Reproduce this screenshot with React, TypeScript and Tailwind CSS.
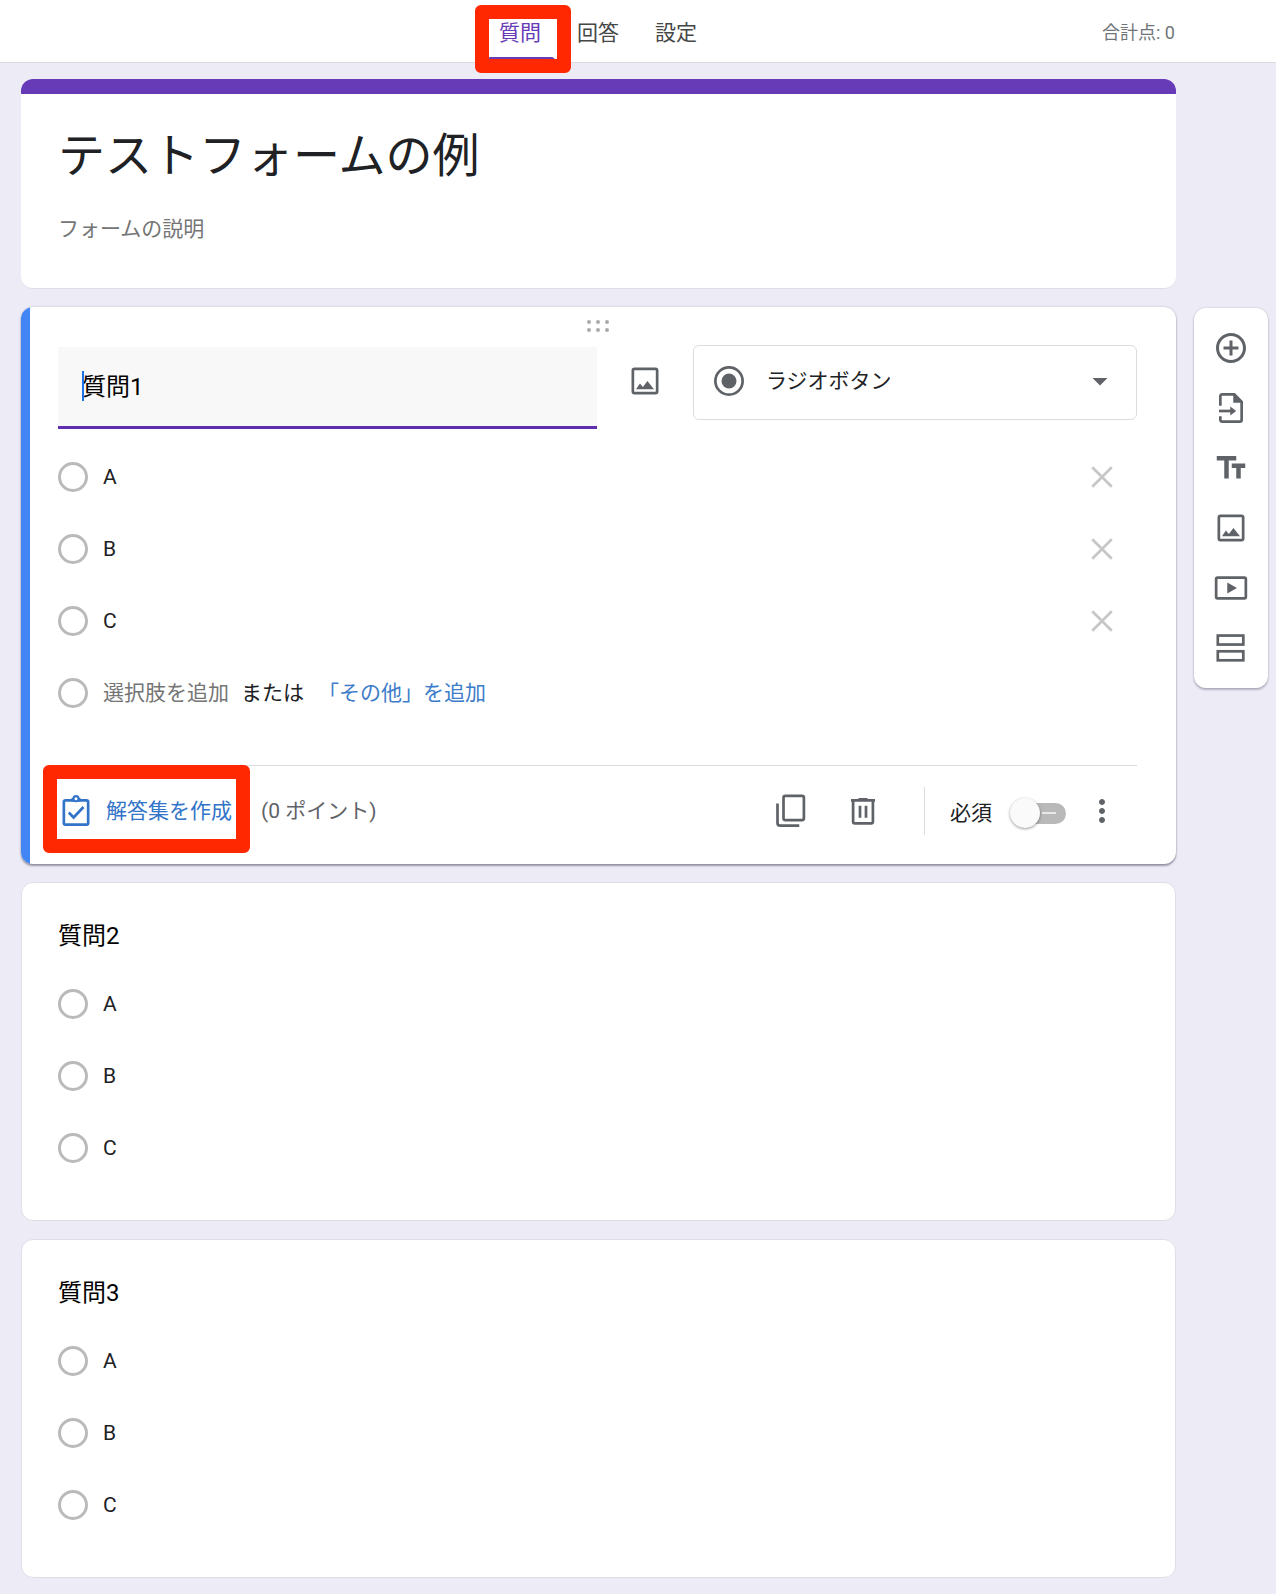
import { useState } from "react";
import type { ReactNode } from "react";
import { MdAddCircleOutline, MdMoreVert, MdTextFields } from "react-icons/md";

const tabs = ["質問", "回答", "設定"];
const options = ["A", "B", "C"];

function Icon({ children }: { children: ReactNode }) {
  return (
    <svg
      viewBox="0 0 24 24"
      className="size-9 shrink-0"
      fill="none"
      stroke="currentColor"
      strokeWidth="1.8"
      aria-hidden="true"
    >
      {children}
    </svg>
  );
}

function ImageIcon() {
  return (
    <Icon>
      <rect x="3.9" y="3.9" width="16.2" height="16.2" rx="1.1" />
      <path d="M6 17.5l2.6-3.8 2 2.3 3-4 4.4 5.500z" fill="currentColor" stroke="none" />
    </Icon>
  );
}

function ImportIcon() {
  return (
    <Icon>
      <path d="M4.9 10.5V4.2c0-.7.5-1.3 1.2-1.3h8.1l4.9 4.9v12c0 .7-.5 1.3-1.2 1.3H6.1c-.7 0-1.2-.6-1.2-1.3v-2.3" />
      <path d="M13.5 2.5v6h6zM11.5 11v6l4-3z" fill="currentColor" stroke="none" />
      <path d="M4 14h9" />
    </Icon>
  );
}

function VideoIcon() {
  return (
    <Icon>
      <rect x="2.1" y="5.1" width="19.8" height="13.8" rx="1" />
      <path d="M9.5 8.3v7.4l6.5-3.7z" fill="currentColor" stroke="none" />
    </Icon>
  );
}

function SectionIcon() {
  return (
    <Icon>
      <rect x="3.2" y="3.7" width="17" height="6" />
      <rect x="3.2" y="14.2" width="17" height="6" />
    </Icon>
  );
}

function ClipboardIcon() {
  return (
    <Icon>
      <rect x="3.9" y="4.9" width="16.2" height="16.2" rx="1.1" />
      <path d="M9 4.5h6" strokeWidth="2.4" />
      <circle cx="12" cy="3.8" r="1.7" fill="white" strokeWidth="1.4" />
      <path d="M7.2 13l3.2 3.3 6.6-7" />
    </Icon>
  );
}

function CopyIcon() {
  return (
    <Icon>
      <rect x="7" y="1.9" width="13.6" height="16.2" rx="1.2" />
      <path d="M3 7v13c0 1.1.6 1.7 1.7 1.7h12.8" />
    </Icon>
  );
}

function TrashIcon() {
  return (
    <Icon>
      <path d="M5.4 5.5v13.6c0 .6.5 1.1 1.2 1.1h10.8c.7 0 1.2-.5 1.2-1.1V5.5M4 4.9h16M9 4.2h6" />
      <path d="M10 8.5v8M14 8.5v8" />
    </Icon>
  );
}

function Radio({ name, id }: { name: string; id: string }) {
  return (
    <input
      type="radio"
      name={name}
      id={id}
      className="size-[30px] shrink-0 appearance-none rounded-full border-[3px] border-[#bababa] bg-white checked:bg-[#673ab7]"
    />
  );
}

function QuestionCard({ title, name }: { title: string; name: string }) {
  return (
    <section className="rounded-xl border border-[#dfdde6] bg-white px-9 pt-[37px] pb-9">
      <h2 className="mb-4 text-2xl text-black">{title}</h2>
      {options.map((option) => (
        <div key={option} className="flex h-[72px] items-center gap-[15px]">
          <Radio name={name} id={`${name}-${option}`} />
          <label htmlFor={`${name}-${option}`}>{option}</label>
        </div>
      ))}
    </section>
  );
}

export default function App() {
  const [title, setTitle] = useState("質問1");
  const [required, setRequired] = useState(false);

  return (
    <div className="min-h-screen bg-[#edebf6] font-['Roboto','Noto_Sans_CJK_JP',sans-serif] text-[21px] leading-8 text-[#202124]">
      <header className="grid h-[63px] grid-cols-[1fr_auto_1fr] items-center border-b border-[#dcdbe0] bg-white pt-1 pr-[101px] pl-[21px]">
        <span />
        <nav className="flex gap-9">
          {tabs.map((tab, i) => (
            <div key={tab} className="relative">
              <button className={i === 0 ? "text-[#673ab7]" : "text-[#444746]"}>{tab}</button>
              {i === 0 && (
                <>
                  <span className="absolute top-10 -left-3 h-1 w-[68px] rounded-t bg-[#673ab7]" />
                  <span className="pointer-events-none absolute -top-3 -left-6 h-[68px] w-24 rounded-md border-[14px] border-[#ff2800]" />
                </>
              )}
            </div>
          ))}
        </nav>
        <span className="text-right text-lg text-[#70757a]">合計点: 0</span>
      </header>

      <div className="flex items-start gap-[18px] pt-4 pr-2 pb-4 pl-[21px]">
        <main className="flex min-w-0 flex-1 flex-col gap-[18px]">
          <section className="overflow-hidden rounded-xl border-b border-[#dfdde6] bg-white">
            <div className="h-[15px] bg-[#673ab7]" />
            <div className="px-[37px] pt-8 pb-[43px]">
              <h1 className="text-[47px] leading-[60px]">テストフォームの例</h1>
              <p className="mt-[27px] text-[#757575]">フォームの説明</p>
            </div>
          </section>

          <section className="flex overflow-hidden rounded-xl bg-white shadow-[0_2px_2px_rgba(60,55,80,0.45),0_0_2px_rgba(60,55,80,0.3)]">
            <div className="w-[9px] shrink-0 bg-[#4285f4]" />
            <div className="min-w-0 flex-1 pr-[39px] pb-2 pl-7">
              <div className="flex h-[38px] items-center justify-center text-[#aaa]">
                <svg viewBox="0 0 24 14" className="h-[14px] w-6" fill="currentColor" aria-hidden="true">
                  {[3, 12, 21].map((x) => (
                    <g key={x}>
                      <circle cx={x} cy="3" r="2" />
                      <circle cx={x} cy="11" r="2" />
                    </g>
                  ))}
                </svg>
              </div>

              <div className="flex items-start">
                <div className="relative flex-1 pt-0.5">
                  <input
                    aria-label="質問"
                    value={title}
                    onChange={(e) => setTitle(e.target.value)}
                    className="block h-[82px] w-full border-b-[3px] border-[#5f2fb0] bg-[#f8f8f8] px-6 pb-1 text-2xl text-black outline-none"
                  />
                  <span className="absolute top-[26px] left-6 h-[30px] w-0.5 bg-[#1a73e8]" />
                </div>
                <button aria-label="画像を追加" className="mx-[30px] mt-[18px] text-[#5f6368]">
                  <ImageIcon />
                </button>
                <div className="relative h-[75px] w-[444px]">
                  <span className="pointer-events-none absolute inset-y-0 left-[18px] flex items-center pb-1 text-[#5f6368]">
                    <Icon>
                      <circle cx="12" cy="12" r="9.1" />
                      <circle cx="12" cy="12" r="5" fill="currentColor" stroke="none" />
                    </Icon>
                  </span>
                  <select
                    aria-label="質問の形式"
                    className="size-full appearance-none rounded-md border border-[#dadce0] bg-transparent pb-1 pl-[72px] outline-none"
                  >
                    <option>ラジオボタン</option>
                  </select>
                  <span className="pointer-events-none absolute inset-y-0 right-[19px] flex items-center pb-1 text-[#5f6368]">
                    <Icon>
                      <path d="M7 10l5 5 5-5z" fill="currentColor" stroke="none" />
                    </Icon>
                  </span>
                </div>
              </div>

              <div className="mt-3">
                {options.map((option) => (
                  <div key={option} className="flex h-[72px] items-center gap-[15px]">
                    <Radio name="q1" id={`q1-${option}`} />
                    <label htmlFor={`q1-${option}`}>{option}</label>
                    <button aria-label={`${option} を削除`} className="mr-[17px] ml-auto text-[#c6c6c6]">
                      <Icon>
                        <path d="M5.5 5.5l13 13M18.5 5.5l-13 13" />
                      </Icon>
                    </button>
                  </div>
                ))}
                <div className="flex h-[72px] items-center">
                  <Radio name="q1" id="q1-add" />
                  <label htmlFor="q1-add" className="ml-[15px] text-[#757575]">
                    選択肢を追加
                  </label>
                  <span className="ml-3">または</span>
                  <button className="ml-[14px] text-[#3d7cc9]">「その他」を追加</button>
                </div>
              </div>

              <div className="mt-9 flex h-[91px] items-center border-t border-[#dadce0]">
                <div className="relative">
                  <button className="flex items-center gap-3 text-[#3274c8]">
                    <ClipboardIcon />
                    解答集を作成
                  </button>
                  <span className="pointer-events-none absolute -top-7 -right-[18px] -bottom-6 -left-[15px] rounded-md border-[14px] border-[#ff2800]" />
                </div>
                <span className="ml-[29px] text-[#5f6368]">(0 ポイント)</span>

                <div className="ml-auto flex items-center text-[#5f6368]">
                  <button aria-label="コピーを作成">
                    <CopyIcon />
                  </button>
                  <button aria-label="削除" className="ml-9">
                    <TrashIcon />
                  </button>
                  <span className="mr-[25px] ml-[43px] h-12 w-px bg-[#dadce0]" />
                  <div className="flex items-center gap-[18px] pt-1">
                    <label htmlFor="required" className="text-[#202124]">
                      必須
                    </label>
                    <span className="relative flex h-[30px] w-14 items-center">
                      <input
                        id="required"
                        type="checkbox"
                        role="switch"
                        checked={required}
                        onChange={(e) => setRequired(e.target.checked)}
                        className="peer ml-2 h-[21px] w-12 appearance-none rounded-full bg-[#b9b9b9] checked:bg-[#b39ddb]"
                      />
                      <span className="pointer-events-none absolute top-[14px] right-2.5 h-0.5 w-[14px] bg-[#e8e8e8]" />
                      <span className="pointer-events-none absolute left-0 size-[30px] rounded-full bg-[#fafafa] shadow-[0_1px_3px_rgba(0,0,0,0.4)] peer-checked:left-[26px]" />
                    </span>
                  </div>
                  <button aria-label="その他のオプション" className="mr-[17px] ml-[18px]">
                    <MdMoreVert className="size-9" />
                  </button>
                </div>
              </div>
            </div>
          </section>

          <QuestionCard title="質問2" name="q2" />
          <QuestionCard title="質問3" name="q3" />
        </main>

        <aside className="mt-[229px] flex w-[74px] shrink-0 flex-col items-center gap-6 rounded-xl bg-white py-[22px] text-[#5f6368] shadow-[0_2px_2px_rgba(60,55,80,0.3),0_0_2px_rgba(60,55,80,0.25)]">
          <button aria-label="質問を追加">
            <MdAddCircleOutline className="size-9" />
          </button>
          <button aria-label="質問をインポート">
            <ImportIcon />
          </button>
          <button aria-label="タイトルと説明を追加">
            <MdTextFields className="size-9" />
          </button>
          <button aria-label="画像を追加">
            <ImageIcon />
          </button>
          <button aria-label="動画を追加">
            <VideoIcon />
          </button>
          <button aria-label="セクションを追加">
            <SectionIcon />
          </button>
        </aside>
      </div>
    </div>
  );
}
